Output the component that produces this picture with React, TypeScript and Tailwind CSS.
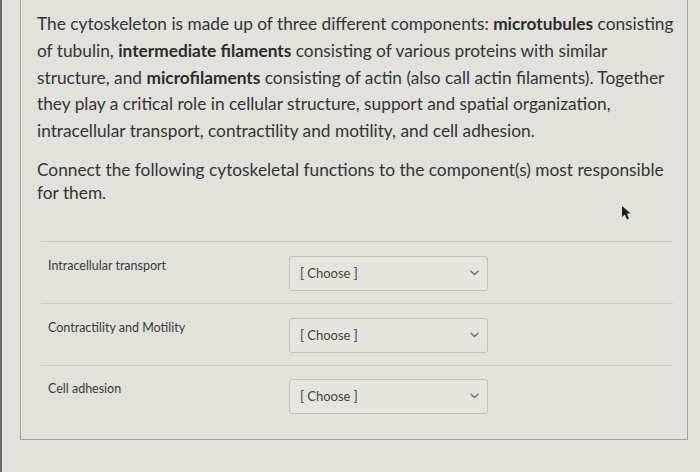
import React from "react";

function Chevron() {
  return (
    <svg width="9" height="6" viewBox="0 0 9 6" fill="none">
      <path d="M1 1.2 L4.5 4.6 L8 1.2" stroke="#6f6f6c" strokeWidth="1.4" strokeLinecap="round" strokeLinejoin="round" />
    </svg>
  );
}

function Row({ label, last }: { label: string; last?: boolean }) {
  return (
    <div className={last ? "flex items-start pt-[13px] pb-[26px]" : "flex items-start pt-[14px] pb-[12px] border-b border-[#cac8c2]"}>
      <div className="w-[248px] pl-[7px] pt-[2px] text-[12.5px] leading-[16px] text-[#3a3a3a]">{label}</div>
      <div className="w-[199px] h-[35px] border border-[#c3c1bb] rounded-[3px] bg-[#e6e4df] flex items-center justify-between pl-[10px] pr-[8px]">
        <span className="text-[13px] text-[#444442]">[ Choose ]</span>
        <Chevron />
      </div>
    </div>
  );
}

export default function App() {
  return (
    <div className="relative w-[700px] h-[472px] overflow-hidden bg-[#e3e1dc] font-['Lato',sans-serif]">
      <div className="h-full border-l-[2px] border-[#6a6965] pl-[18px] pr-[12px]">
        <div className="h-[440px] border-x border-b border-[#a3a29e] pl-[16px] pr-[8px] pt-[11px]">
          <p className="text-[17.3px] leading-[26.8px] text-[#343434] whitespace-nowrap">
            The cytoskeleton is made up of three different components: <b className="font-bold text-[#2c2c2c]">microtubules</b> consisting
            <br />
            of tubulin, <b className="font-bold text-[#2c2c2c]">intermediate filaments</b> consisting of various proteins with similar
            <br />
            structure, and <b className="font-bold text-[#2c2c2c]">microfilaments</b> consisting of actin (also call actin filaments). Together
            <br />
            they play a critical role in cellular structure, support and spatial organization,
            <br />
            intracellular transport, contractility and motility, and cell adhesion.
          </p>
          <p className="mt-[13px] text-[17.3px] leading-[23.5px] text-[#343434] whitespace-nowrap">
            Connect the following cytoskeletal functions to the component(s) most responsible
            <br />
            for them.
          </p>
          <div className="mt-[36px] ml-[4px] mr-[6px] border-t border-[#cac8c2]">
            <Row label="Intracellular transport" />
            <Row label="Contractility and Motility" />
            <Row label="Cell adhesion" last />
          </div>
        </div>
      </div>
      <svg className="absolute left-[621px] top-[205px]" width="12" height="16" viewBox="0 0 12 16">
        <path d="M1 1 L1 12 L3.8 9.4 L6 14.5 L8 13.6 L5.9 8.6 L9.8 8.4 Z" fill="#1e1e1e" />
      </svg>
    </div>
  );
}
